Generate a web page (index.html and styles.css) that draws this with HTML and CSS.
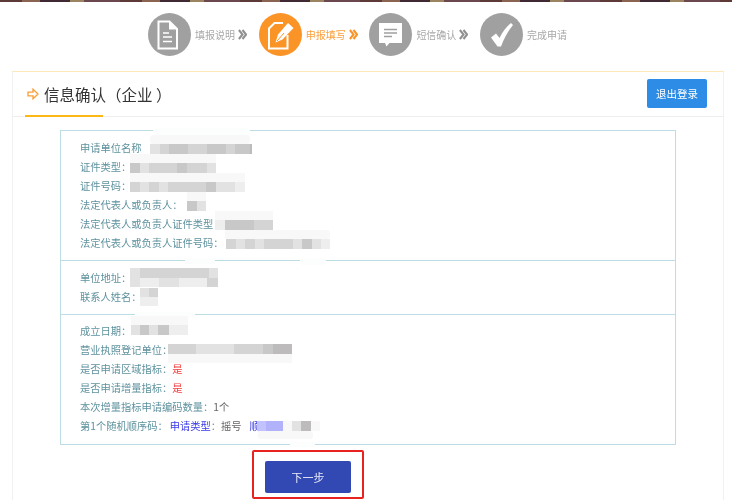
FILE: index.html
```html
<!DOCTYPE html>
<html lang="zh">
<head>
<meta charset="utf-8">
<title>信息确认（企业）</title>
<link rel="stylesheet" href="styles.css">
</head>
<body>
<div class="page">
  <div class="strip"></div>
  <div class="steps">
    <div class="step">
      <svg class="ico" viewBox="0 0 43 43"><circle class="disc" cx="21.5" cy="21.5" r="21.5"/><path class="wl" d="M10.500 8.500h11l7.500 7.500v19.500h-18.500z"/><path class="wf" d="M21 8v8.500h8.500z"/><path class="wl thin" d="M15 20h6M15 24h9M15 28.500h9"/></svg>
      <span class="lbl">填报说明</span>
      <svg class="chev" viewBox="0 0 10 12"><path d="M1 1l4 5-4 5M5 1l4 5-4 5"/></svg>
    </div>
    <div class="step on">
      <svg class="ico" viewBox="0 0 43 43"><circle class="disc" cx="21.5" cy="21.5" r="21.5"/><path class="wl" d="M24 10h-8.500l-5.500 5.500v20h18.500v-13.500"/><path class="wf" d="M16.500 29.500l2.500-8 10-11.500 5.500 5-11 11.500z"/><path class="ol" d="M18 28l7-8"/></svg>
      <span class="lbl">申报填写</span>
      <svg class="chev" viewBox="0 0 10 12"><path d="M1 1l4 5-4 5M5 1l4 5-4 5"/></svg>
    </div>
    <div class="step">
      <svg class="ico" viewBox="0 0 43 43"><circle class="disc" cx="21.5" cy="21.5" r="21.5"/><path class="wf" d="M10 10h23v20h-12.500l-3 3.500-1.500-3.500h-6z"/><path class="gl" d="M15 16.500h13M15 20h13M15 23.500h8"/></svg>
      <span class="lbl">短信确认</span>
      <svg class="chev" viewBox="0 0 10 12"><path d="M1 1l4 5-4 5M5 1l4 5-4 5"/></svg>
    </div>
    <div class="step">
      <svg class="ico" viewBox="0 0 43 43"><circle class="disc" cx="21.5" cy="21.5" r="21.5"/><path class="wf" d="M11 24.500l5-4 3.500 4.500c3-6.500 7-11.500 11.500-15l2 2c-5 6-9 13.500-12 21.500h-3.500z"/></svg>
      <span class="lbl">完成申请</span>
    </div>
  </div>

  <section class="card">
    <header class="card-head">
      <div class="title">
        <svg class="arrow" viewBox="0 0 12 12"><path d="M1 4.200h5v-3l5 4.800-5 4.800v-3h-5z"/></svg>
        <h1>信息确认（企业 ）</h1>
      </div>
      <button class="logout" type="button">退出登录</button>
    </header>

    <div class="info">
      <div class="group">
        <p>申请单位名称</p>
        <p>证件类型：</p>
        <p>证件号码：</p>
        <p>法定代表人或负责人：</p>
        <p>法定代表人或负责人证件类型</p>
        <p>法定代表人或负责人证件号码：</p>
      </div>
      <div class="group">
        <p>单位地址：</p>
        <p>联系人姓名：</p>
      </div>
      <div class="group tight">
        <p>成立日期：</p>
        <p>营业执照登记单位：</p>
        <p>是否申请区域指标：<b class="red">是</b></p>
        <p>是否申请增量指标：<b class="red">是</b></p>
        <p>本次增量指标申请编码数量：<span class="dark">1个</span></p>
        <p>第1个随机顺序码：<span class="blue ml">申请类型</span>：<span class="dark">摇号</span><span class="blue ml2">顺</span></p>
      </div>
    </div>

    <div class="action">
      <div class="mark"><button class="next" type="button">下一步</button></div>
    </div>
  </section>
</div>

<svg class="mosaic" viewBox="0 0 732 500" aria-hidden="true">
  <g class="c6">
    <rect x="153" y="128" width="97" height="7" rx="3"/>
    <rect x="185" y="258" width="30" height="6"/><rect x="300" y="258" width="26" height="7" rx="3"/>
    <rect x="135" y="312" width="60" height="5"/><rect x="290" y="442" width="25" height="5"/>
  </g>
  <g class="c5">
    <rect x="150" y="135" width="100" height="9" rx="3"/>
    <rect x="130" y="154" width="86" height="9"/>
    <rect x="130" y="173" width="115" height="9"/>
    <rect x="187" y="192" width="19" height="9"/>
    <rect x="215" y="211" width="58" height="9"/>
    <rect x="225" y="230" width="105" height="9" rx="3"/>
    <rect x="131" y="316" width="57" height="9"/>
    <rect x="168" y="354" width="124" height="9"/>
    <rect x="258" y="431" width="55" height="8" rx="3"/>
  </g>

  <rect class="c3" x="150" y="144" width="10" height="10"/><rect class="c2" x="160" y="144" width="9" height="10"/><rect class="c1" x="169" y="144" width="19" height="10"/><rect class="c2" x="188" y="144" width="19" height="10"/><rect class="c1" x="207" y="144" width="19" height="10"/><rect class="c2" x="226" y="144" width="9" height="10"/><rect class="c1" x="235" y="144" width="15" height="10"/><rect class="c0" x="250" y="144" width="2" height="10"/>

  <rect class="c1" x="130" y="163" width="10" height="10"/><rect class="c3" x="140" y="163" width="9" height="10"/><rect class="c2" x="149" y="163" width="28" height="10"/><rect class="c1" x="177" y="163" width="10" height="10"/><rect class="c2" x="187" y="163" width="20" height="10"/><rect class="c3" x="207" y="163" width="9" height="10"/>

  <rect class="c2" x="130" y="182" width="10" height="10"/><rect class="c3" x="140" y="182" width="9" height="10"/><rect class="c2" x="149" y="182" width="10" height="10"/><rect class="c3" x="159" y="182" width="9" height="10"/><rect class="c2" x="168" y="182" width="38" height="10"/><rect class="c1" x="206" y="182" width="10" height="10"/><rect class="c3" x="216" y="182" width="19" height="10"/><rect class="c4" x="235" y="182" width="10" height="10"/>

  <rect class="c1" x="187" y="201" width="10" height="10"/><rect class="c3" x="197" y="201" width="9" height="10"/>

  <rect class="c4" x="215" y="220" width="10" height="10"/><rect class="c1" x="225" y="220" width="29" height="10"/><rect class="c2" x="254" y="220" width="19" height="10"/>

  <rect class="c2" x="226" y="239" width="10" height="10"/><rect class="c3" x="236" y="239" width="9" height="10"/><rect class="c2" x="245" y="239" width="10" height="10"/><rect class="c3" x="255" y="239" width="9" height="10"/><rect class="c2" x="264" y="239" width="29" height="10"/><rect class="c3" x="293" y="239" width="9" height="10"/><rect class="c1" x="302" y="239" width="10" height="10"/><rect class="c3" x="312" y="239" width="9" height="10"/><rect class="c4" x="321" y="239" width="9" height="10"/>

  <rect class="c3" x="130" y="268" width="10" height="10"/><rect class="c2" x="140" y="268" width="69" height="10"/><rect class="c3" x="209" y="268" width="9" height="10"/>
  <rect class="c3" x="130" y="278" width="10" height="9"/><rect class="c4" x="140" y="278" width="19" height="9"/><rect class="c3" x="159" y="278" width="20" height="9"/><rect class="c4" x="179" y="278" width="28" height="9"/><rect class="c2" x="207" y="278" width="11" height="9"/>
  <rect class="c3" x="140" y="288" width="9" height="9"/><rect class="c2" x="149" y="288" width="9" height="9"/>
  <rect class="c4" x="140" y="297" width="18" height="9"/>

  <rect class="c3" x="131" y="325" width="9" height="10"/><rect class="c1" x="140" y="325" width="9" height="10"/><rect class="c3" x="149" y="325" width="9" height="10"/><rect class="c1" x="158" y="325" width="11" height="10"/><rect class="c4" x="169" y="325" width="19" height="10"/>

  <rect class="c2" x="168" y="344" width="28" height="10"/><rect class="c3" x="196" y="344" width="38" height="10"/><rect class="c2" x="234" y="344" width="29" height="10"/><rect class="c1" x="263" y="344" width="10" height="10"/><rect class="c0" x="273" y="344" width="19" height="10"/>

  <rect class="b1" x="257" y="421" width="9" height="10"/><rect class="b2" x="266" y="421" width="17" height="10"/><rect class="c5" x="283" y="421" width="9" height="10"/><rect class="c3" x="292" y="421" width="9" height="10"/><rect class="c0" x="301" y="421" width="10" height="10"/><rect class="c5" x="311" y="421" width="9" height="10"/>
</svg>
</body>
</html>
```

FILE: styles.css
```css
* { box-sizing: border-box; }
html, body { margin: 0; padding: 0; background: #fff; }
body { width: 732px; height: 500px; overflow: hidden; position: relative; font-family: "Noto Sans CJK SC", "Liberation Sans", sans-serif; }
.page { filter: blur(0.4px); height: 500px; }
.strip { height: 2px; background: repeating-linear-gradient(90deg, #5d3a38 0 22px, #8a6450 22px 40px, #3f2a33 40px 70px, #9a8560 70px 84px, #6b4750 84px 120px); }

.steps { display: flex; height: 69px; padding: 11px 0 0 148px; }
.step { display: flex; align-items: center; height: 43px; width: 110.7px; color: #a8a8a8; }
.step.on { color: #fb9f3a; }
.ico { width: 43px; height: 43px; flex: none; }
.disc { fill: #a0a0a0; }
.on .disc { fill: #fb9427; }
.wl { fill: none; stroke: #fff; stroke-width: 2; }
.wl.thin { stroke-width: 1.400; }
.wf { fill: #fff; }
.gl { fill: none; stroke: #a0a0a0; stroke-width: 1.300; }
.ol { fill: none; stroke: #fb9427; stroke-width: 1; }
.lbl { font-size: 10px; line-height: 14px; margin-left: 4px; }
.chev { width: 9px; height: 11px; margin-left: 3px; }
.chev path { fill: none; stroke: #909090; stroke-width: 2.300; }
.on .chev path { stroke: #fb9427; }

.card { margin: 0 8px 0 12px; height: 429px; border: 1px solid #f1f1f1; border-top: 1px solid #fde9b8; border-bottom: 0; }
.card-head { height: 45px; border-bottom: 1px solid #eee; display: flex; justify-content: space-between; padding: 7px 16px 0 12px; position: relative; }
.card-head::after { content: ""; position: absolute; left: 12px; bottom: -1px; width: 78px; height: 2px; background: #fdb913; }
.title { display: flex; align-items: center; height: 29px; }
.arrow { width: 12px; height: 12px; margin-left: 2px; }
.arrow path { fill: none; stroke: #fb9f3a; stroke-width: 1.300; }
h1 { margin: 0 0 0 5px; font-size: 15.500px; font-weight: 400; color: #333; line-height: 22px; white-space: nowrap; }
.logout { width: 60px; height: 29px; border: 0; border-radius: 2px; background: #2d8ce6; color: #fff; font: 10.500px "Noto Sans CJK SC", sans-serif; padding: 0; }

.info { margin: 13px 0 0 47px; width: 616px; height: 315px; border: 1px solid #bcdde4; }
.group { padding: 7px 0 8px 19px; border-bottom: 1px solid #bcdde4; }
.group.tight { padding-top: 6px; }
.group:last-child { border-bottom: 0; padding-bottom: 0; }
.group p { margin: 0; font-size: 10.250px; line-height: 19px; height: 19px; color: #5e929e; white-space: nowrap; }
.red { color: #f43a3a; font-weight: 400; }
.dark { color: #666; }
.blue { color: #3a3ae8; }
.ml { margin-left: 2px; }
.ml2 { margin-left: 8px; }

.action { padding: 5px 0 0 239px; }
.mark { width: 112px; height: 49px; padding-top: 5px; border: 2px solid #e8231f; border-radius: 2px; display: flex; align-items: center; justify-content: center; }
.next { width: 86px; height: 32px; border: 0; border-radius: 2px; background: #3249b4; color: #e8ecfa; font: 11px "Noto Sans CJK SC", sans-serif; padding: 0; }

.mosaic { position: absolute; left: 0; top: 0; width: 732px; height: 500px; filter: blur(0.5px); pointer-events: none; }
.c0 { fill: #bdbbbb; }
.c1 { fill: #c8c8c8; }
.c2 { fill: #d4d4d4; }
.c3 { fill: #e2e2e2; }
.c4 { fill: #eeeeee; }
.c5 { fill: #f8f8f8; }
.c6 { fill: #fcfdfd; }
.b1 { fill: #c2c2ff; }
.b2 { fill: #b2b2fb; }
```
